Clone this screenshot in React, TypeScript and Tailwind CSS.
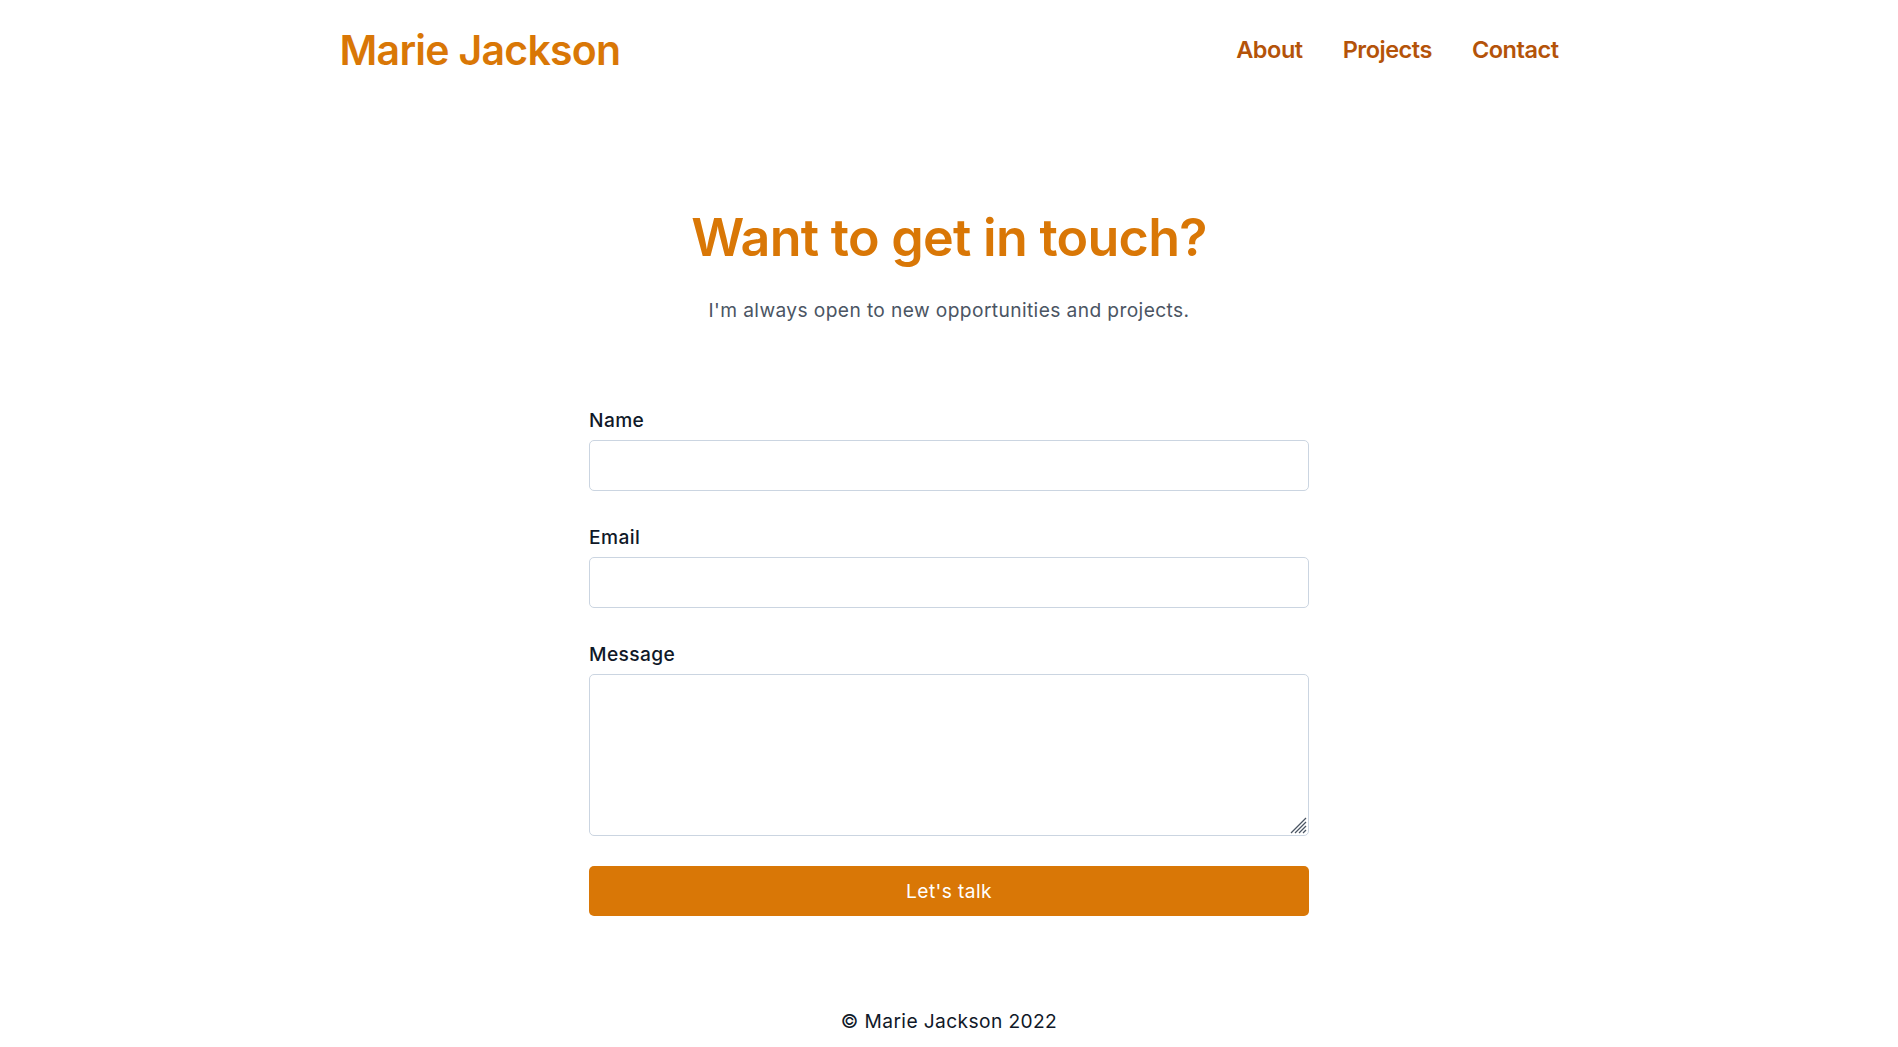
import React from "react";

const font = { fontFamily: "Inter, 'Noto Sans', sans-serif" };

function Field({ label, children }: { label: string; children: React.ReactNode }) {
  return (
    <div className="flex flex-col">
      <label className="mb-[6px] text-[19.2px] leading-[28px] font-medium tracking-[0.02em] text-gray-900">
        {label}
      </label>
      {children}
    </div>
  );
}

export default function App() {
  return (
    <div className="min-h-screen bg-white" style={font}>
      {/* Header */}
      <header className="mx-auto flex h-[100px] max-w-[1219px] items-center justify-between">
        <a href="#" className="text-[41px] leading-none font-semibold tracking-[-0.018em] text-[#d97706]">
          Marie Jackson
        </a>
        <nav className="flex items-center gap-[40px] text-[23.5px] leading-none font-semibold tracking-[-0.02em] text-[#b45309]">
          <a href="#">About</a>
          <a href="#">Projects</a>
          <a href="#">Contact</a>
        </nav>
      </header>

      {/* Contact */}
      <main className="flex flex-col items-center">
        <h1 className="mt-[112px] text-[52px] leading-none font-semibold tracking-[-0.014em] text-[#d97706]">
          Want to get in touch?
        </h1>
        <p className="mt-[33px] text-[19.2px] leading-[27px] tracking-[0.02em] text-[#4b5563]">
          I'm always open to new opportunities and projects.
        </p>

        <form className="mt-[82px] flex w-[720px] flex-col" onSubmit={(e) => e.preventDefault()}>
          <div className="flex flex-col gap-[32px]">
            <Field label="Name">
              <input type="text" className="h-[51px] rounded-[5px] border border-[#cbd5e1] px-3 text-[19px] outline-none" />
            </Field>
            <Field label="Email">
              <input type="email" className="h-[51px] rounded-[5px] border border-[#cbd5e1] px-3 text-[19px] outline-none" />
            </Field>
            <Field label="Message">
              <div className="relative flex">
                <textarea className="h-[162px] w-full resize-none rounded-[5px] border border-[#cbd5e1] px-3 py-2 text-[19px] outline-none" />
                {/* resize grip */}
                <svg className="pointer-events-none absolute right-[2px] bottom-[2px] h-[17px] w-[17px]" viewBox="0 0 17 17">
                  <g stroke="#4b5563" strokeWidth="1.2">
                    <line x1="16" y1="1" x2="1" y2="16" />
                    <line x1="16" y1="5" x2="5" y2="16" />
                    <line x1="16" y1="9" x2="9" y2="16" />
                    <line x1="16" y1="13" x2="13" y2="16" />
                  </g>
                </svg>
              </div>
            </Field>
          </div>
          <button
            type="submit"
            className="mt-[30px] h-[50px] rounded-[5px] bg-[#d97706] text-[19.2px] tracking-[0.02em] text-white"
          >
            Let's talk
          </button>
        </form>
      </main>

      <footer className="mt-[91px] pb-10 text-center text-[19.2px] leading-[28px] tracking-[0.02em] text-gray-900">
        © Marie Jackson 2022
      </footer>
    </div>
  );
}
